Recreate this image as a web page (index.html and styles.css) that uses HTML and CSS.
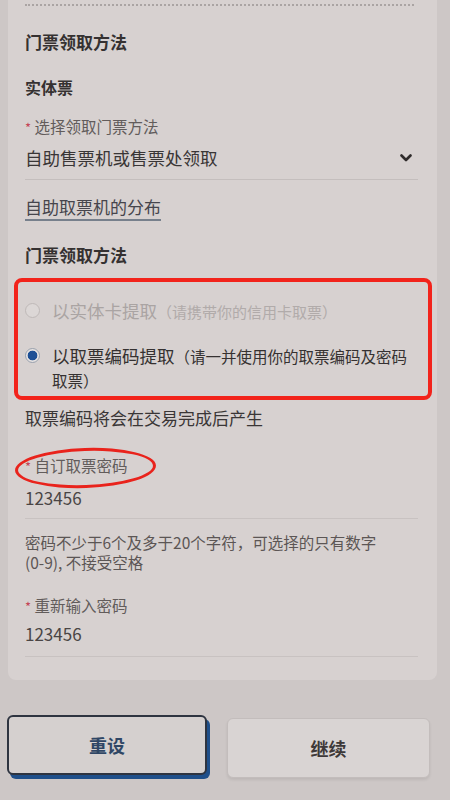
FILE: index.html
```html
<!DOCTYPE html>
<html lang="zh-CN">
<head>
    <meta charset="UTF-8">
    <meta name="viewport" content="width=device-width, initial-scale=1.0">
    <title>门票领取方法</title>
    <link rel="stylesheet" href="styles.css">
</head>
<body>
    <div class="card">
        <div class="dots"></div>
        <h2 class="section-title">门票领取方法</h2>
        <h3 class="sub-title">实体票</h3>

        <p class="field-label"><span class="star">*</span> 选择领取门票方法</p>
        <div class="select-row">
            <span class="field-value">自助售票机或售票处领取</span>
            <svg class="chevron" width="12" height="10" viewBox="0 0 12 10">
                <path d="M1.5 2.5 L6 7 L10.5 2.5" fill="none" stroke="#2f2b2b" stroke-width="2.6" stroke-linecap="round" stroke-linejoin="round"/>
            </svg>
        </div>

        <a class="map-link">自助取票机的分布</a>

        <h2 class="section-title second">门票领取方法</h2>

        <div class="options-box">
            <div class="option disabled">
                <span class="radio"></span>
                <p class="option-text">以实体卡提取<span class="option-hint">（请携带你的信用卡取票）</span></p>
            </div>
            <div class="option checked">
                <span class="radio"></span>
                <p class="option-text">以取票编码提取<span class="option-hint">（请一并使用你的取票编码及密码取票）</span></p>
            </div>
        </div>

        <p class="note">取票编码将会在交易完成后产生</p>

        <p class="field-label circled"><span class="star">*</span> 自订取票密码<span class="ring"></span></p>
        <div class="input-row">123456</div>

        <p class="hint">密码不少于6个及多于20个字符，可选择的只有数字(0-9), 不接受空格</p>

        <p class="field-label repeat"><span class="star">*</span> 重新输入密码</p>
        <div class="input-row last">123456</div>
    </div>

    <div class="actions">
        <button class="btn btn-reset">重设</button>
        <button class="btn btn-next">继续</button>
    </div>
</body>
</html>
```

FILE: styles.css
```css
* {
    margin: 0;
    padding: 0;
    box-sizing: border-box;
}

body {
    font-family: "Noto Sans CJK SC", "Noto Sans", sans-serif;
    background: #cdc7c6;
    color: #3a3636;
    width: 450px;
    height: 800px;
    overflow: hidden;
}

.card {
    margin: 0 13px 0 8px;
    padding: 4px 19px 23px 17px;
    background: #d7d1d0;
    border-radius: 0 0 8px 8px;
}

.dots {
    height: 2px;
    border-top: 2px dotted #aaa4a3;
    margin-right: 4px;
}

.section-title {
    font-size: 17px;
    font-weight: bold;
    line-height: 24px;
    margin-top: 24px;
    color: #353131;
}

.section-title.second {
    margin-top: 22px;
}

.sub-title {
    font-size: 16px;
    font-weight: bold;
    line-height: 24px;
    margin-top: 21px;
    color: #353131;
}

.field-label {
    font-size: 15.5px;
    line-height: 20px;
    margin-top: 17px;
    color: #625c5b;
}

.star {
    display: inline-block;
    line-height: 20px;
    color: #c44556;
    font-size: 13px;
}

.select-row {
    display: flex;
    justify-content: space-between;
    align-items: center;
    margin-top: 7px;
    padding-bottom: 8px;
    border-bottom: 1px solid #c4bebd;
}

.field-value {
    font-size: 17.5px;
    line-height: 26px;
    color: #3a3636;
}

.chevron {
    margin-right: 6px;
}

.map-link {
    display: inline-block;
    margin-top: 15px;
    font-size: 17px;
    line-height: 24px;
    color: #46454c;
    border-bottom: 2px solid #77808c;
}

.options-box {
    margin: 11px -14px 0 -11px;
    padding: 17px 12px 4px 7px;
    border: 4px solid #f2231b;
    border-radius: 8px;
}

.option {
    display: flex;
    align-items: flex-start;
    gap: 12px;
}

.option.checked {
    margin-top: 21px;
}

.radio {
    flex: none;
    width: 15px;
    height: 15px;
    margin-top: 4px;
    border-radius: 50%;
    border: 1.5px solid #bfb9b8;
    background: #dcd7d6;
}

.checked .radio {
    border: 1px solid #9aa2ae;
    background: radial-gradient(circle, #1d4f95 0, #1d4f95 4.5px, #e6e2e1 5.2px);
}

.option-text {
    font-size: 17.5px;
    line-height: 23px;
    color: #353131;
}

.option-hint {
    font-size: 15.5px;
}

.disabled .option-text {
    color: #aaa4a3;
}

.disabled .option-hint {
    color: #b1abaa;
    font-size: 15px;
}

.note {
    margin-top: 6px;
    font-size: 17px;
    line-height: 24px;
    color: #3a3636;
}

.circled {
    position: relative;
    margin-top: 25px;
    display: inline-block;
}

.ring {
    position: absolute;
    left: -10px;
    top: -7px;
    width: 141px;
    height: 40px;
    border: 3px solid #e9231c;
    border-radius: 50%;
    transform: rotate(-2deg);
}

.input-row {
    margin-top: 9px;
    padding-bottom: 8px;
    font-size: 17px;
    line-height: 24px;
    color: #4a4545;
    border-bottom: 1px solid #c8c2c1;
}

.input-row.last {
    margin-top: 5px;
    padding-bottom: 10px;
}

.hint {
    margin-top: 14px;
    margin-right: 40px;
    font-size: 15.5px;
    line-height: 19.5px;
    color: #5c5655;
}

.field-label.repeat {
    margin-top: 23px;
}

.actions {
    display: flex;
    gap: 20px;
    margin-top: 35px;
    padding: 0 20px 0 7px;
}

.btn {
    font-family: "Noto Sans CJK SC", "Noto Sans", sans-serif;
    font-size: 18px;
    font-weight: bold;
    height: 60px;
    border-radius: 6px;
    cursor: pointer;
}

.btn-reset {
    width: 200px;
    background: #d5d0cf;
    color: #2f4665;
    border: 2px solid #2e3440;
    box-shadow: 3px 4px 0 #1f4f8a;
}

.btn-next {
    flex: 1;
    margin-top: 3px;
    background: #d9d4d3;
    color: #3d3838;
    border: 1px solid #c3bdbc;
    box-shadow: 0 2px 3px rgba(0, 0, 0, 0.08);
}
```
